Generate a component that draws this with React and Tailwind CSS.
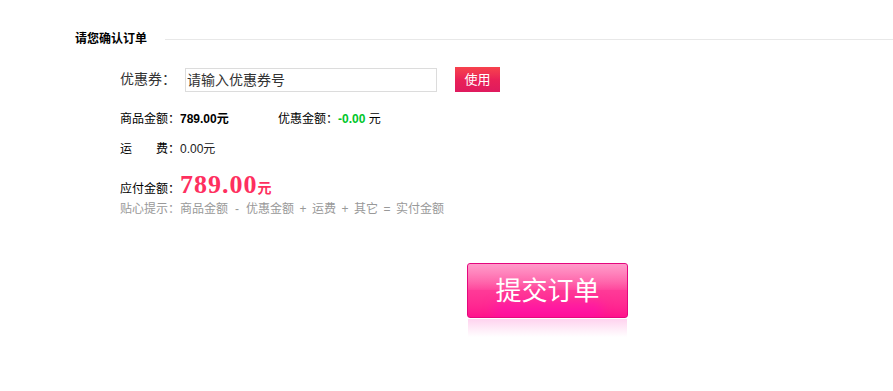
import React from 'react'

const font = { fontFamily: '"Liberation Sans", "Noto Sans CJK SC", sans-serif' }

const Sep = ({ children }) => (
  <span className="inline-block w-[18px] text-center">{children}</span>
)

const App = () => {
  return (
    <div className="min-h-[391px] w-[893px] bg-white pt-[32px] text-[12px] text-black" style={font}>
      {/* Title */}
      <div className="flex items-center pl-[75px]">
        <h2 className="text-[12px] font-bold leading-[14px] text-black">请您确认订单</h2>
        <div className="ml-[18px] h-px flex-1 bg-[#e8e8e8]" />
      </div>

      <div className="pl-[120px]">
        {/* Coupon */}
        <div className="mt-[21px] flex h-[25px] items-center">
          <span className="w-[65px] text-[14px] text-[#333]">优惠券：</span>
          <input
            type="text"
            placeholder="请输入优惠券号"
            className="h-[24px] w-[252px] border border-[#dcdcdc] px-[1px] text-[14px] text-[#333] outline-none placeholder:text-[#333]"
            style={font}
          />
          <button className="ml-[18px] h-[25px] w-[45px] bg-gradient-to-b from-[#f7424c] via-[#ea2157] to-[#df1a5e] text-[13px] leading-[25px] text-white">
            使用
          </button>
        </div>

        {/* Amounts */}
        <div className="mt-[19px] flex leading-[16px]">
          <span className="inline-block w-[158px]">
            商品金额：<b>789.00元</b>
          </span>
          <span>
            优惠金额：<b className="text-[#00c62a]">-0.00</b> 元
          </span>
        </div>

        <div className="mt-[14px] flex leading-[16px]">
          <span className="flex w-[60px] justify-between">
            <span>运</span>
            <span>费：</span>
          </span>
          <span className="text-[#222]">0.00元</span>
        </div>

        <div className="mt-[13px] flex items-baseline leading-[30px]">
          <span>应付金额：</span>
          <span
            className="text-[26px] font-bold tracking-[1px] text-[#fe2f5f]"
            style={{ fontFamily: '"Liberation Serif", serif' }}
          >
            789.00
          </span>
          <span className="text-[14px] font-bold text-[#fe2f5f]">元</span>
        </div>

        <p className="-mt-[3px] leading-[16px] text-[#999]">
          贴心提示：商品金额<Sep>-</Sep>优惠金额<Sep>+</Sep>运费<Sep>+</Sep>其它<Sep>=</Sep>实付金额
        </p>
      </div>

      {/* Submit */}
      <div className="ml-[467px] mt-[46px] w-[161px]">
        <button className="relative h-[55px] w-[161px] overflow-hidden rounded-[3px] border border-[#e4077e] bg-gradient-to-b from-[#ff7ab8] via-[#ff3a97] to-[#ff118c] text-[26px] leading-[52px] text-white">
          <span className="absolute inset-x-0 top-0 h-[26px] bg-gradient-to-b from-white/25 to-white/5" />
          <span className="absolute bottom-0 left-1/2 h-[14px] w-[110px] -translate-x-1/2 rounded-full bg-[#ff00c8]/40 blur-[6px]" />
          <span className="relative">提交订单</span>
        </button>
        <div className="mx-auto mt-[1px] h-[18px] w-[159px] bg-gradient-to-b from-[#ffd3ef] to-white/0" />
      </div>
    </div>
  )
}

export default App
